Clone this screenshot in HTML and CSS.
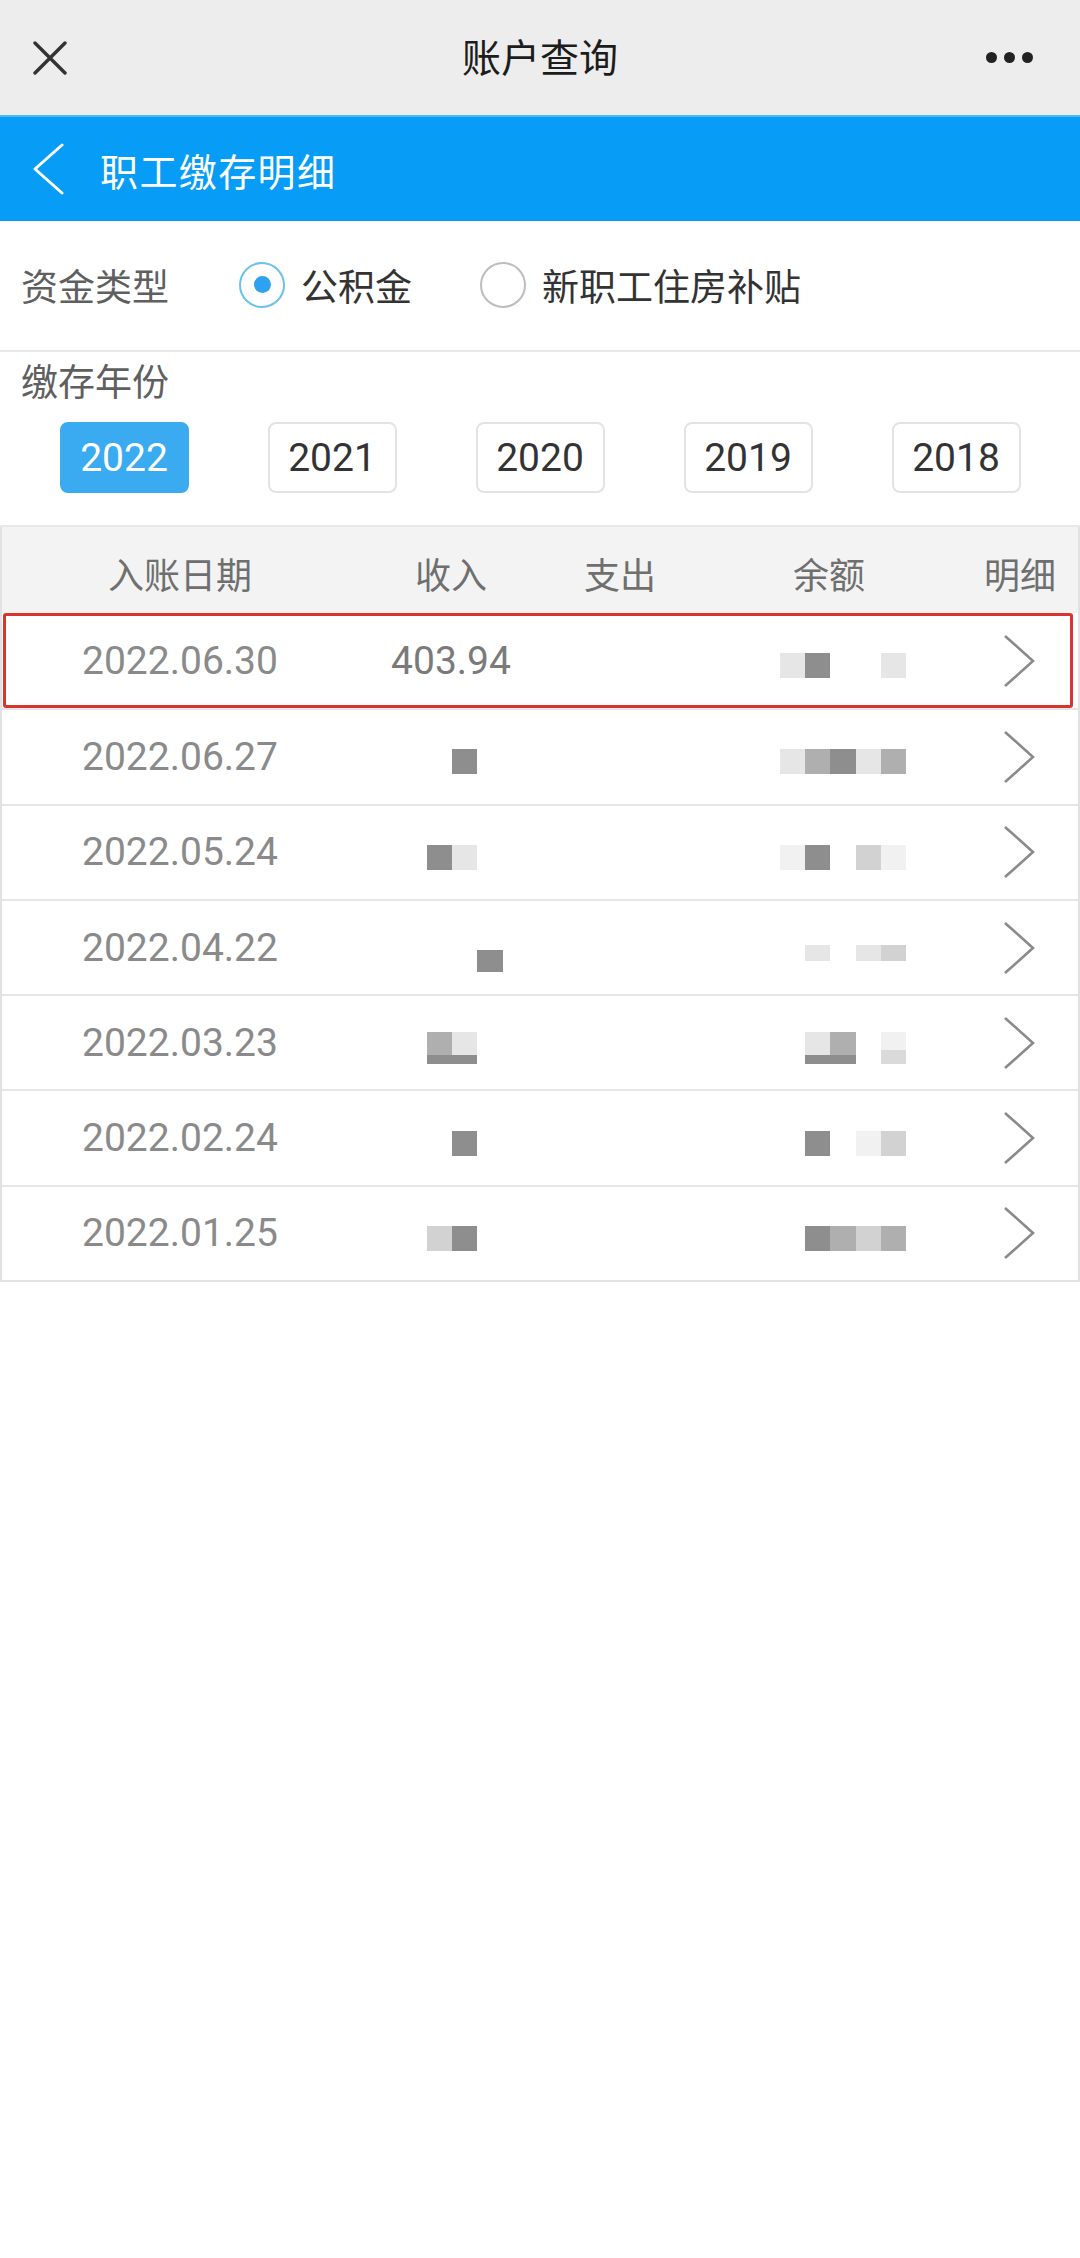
FILE: index.html
```html
<!DOCTYPE html>
<html lang="zh-CN">
<head>
<meta charset="utf-8">
<title>账户查询</title>
<link rel="stylesheet" href="styles.css">
</head>
<body>
<div class="page">
  <header class="topbar">
    <svg class="close" viewBox="0 0 34 34" width="34" height="34"><path d="M2 2L32 32M32 2L2 32" stroke="#333" stroke-width="3.4" stroke-linecap="round" fill="none"/></svg>
    <div class="topbar-title">账户查询</div>
    <div class="more"><span></span><span></span><span></span></div>
  </header>

  <div class="navbar">
    <svg class="back" viewBox="0 0 32 52" width="32" height="52"><polyline points="30,2 3,26 30,50" stroke="#fff" stroke-width="3" fill="none" stroke-linecap="round" stroke-linejoin="round"/></svg>
    <div class="nav-title">职工缴存明细</div>
  </div>

  <section class="fund-type">
    <span class="label">资金类型</span>
    <label class="radio checked"><span class="circle"></span><span class="radio-text">公积金</span></label>
    <label class="radio"><span class="circle"></span><span class="radio-text">新职工住房补贴</span></label>
  </section>

  <section class="years">
    <div class="label">缴存年份</div>
    <div class="year-grid">
      <div class="year active">2022</div>
      <div class="year">2021</div>
      <div class="year">2020</div>
      <div class="year">2019</div>
      <div class="year">2018</div>
    </div>
  </section>

  <div class="table">
    <div class="thead row-grid">
      <div>入账日期</div><div>收入</div><div>支出</div><div>余额</div><div>明细</div>
    </div>

    <div class="trow row-grid highlight">
      <div class="date">2022.06.30</div>
      <div class="num">403.94</div>
      <div></div>
      <div class="mask bal"><i class="b1"></i><i class="b4"></i><i></i><i></i><i class="b1"></i></div>
      <div class="arrow"><svg viewBox="0 0 32 52" width="32" height="52"><polyline points="2,1 30,26 2,51" stroke="#8a8a8a" stroke-width="2.6" fill="none"/></svg></div>
    </div>

    <div class="trow row-grid">
      <div class="date">2022.06.27</div>
      <div class="mask inc"><i></i><i class="b4"></i></div>
      <div></div>
      <div class="mask bal"><i class="b1"></i><i class="b3"></i><i class="b4"></i><i class="b1"></i><i class="b3"></i></div>
      <div class="arrow"><svg viewBox="0 0 32 52" width="32" height="52"><polyline points="2,1 30,26 2,51" stroke="#8a8a8a" stroke-width="2.6" fill="none"/></svg></div>
    </div>

    <div class="trow row-grid">
      <div class="date">2022.05.24</div>
      <div class="mask inc"><i class="b4"></i><i class="b1"></i></div>
      <div></div>
      <div class="mask bal"><i class="b5"></i><i class="b4"></i><i></i><i class="b2"></i><i class="b5"></i></div>
      <div class="arrow"><svg viewBox="0 0 32 52" width="32" height="52"><polyline points="2,1 30,26 2,51" stroke="#8a8a8a" stroke-width="2.6" fill="none"/></svg></div>
    </div>

    <div class="trow row-grid">
      <div class="date">2022.04.22</div>
      <div class="mask inc low"><i></i><i></i><i class="b4"></i></div>
      <div></div>
      <div class="mask bal short"><i></i><i class="b1"></i><i></i><i class="b1"></i><i class="b2"></i></div>
      <div class="arrow"><svg viewBox="0 0 32 52" width="32" height="52"><polyline points="2,1 30,26 2,51" stroke="#8a8a8a" stroke-width="2.6" fill="none"/></svg></div>
    </div>

    <div class="trow row-grid">
      <div class="date">2022.03.23</div>
      <div class="mask inc tall"><i class="b3 tail"></i><i class="b1 tail"></i></div>
      <div></div>
      <div class="mask bal tall"><i></i><i class="b1 tail"></i><i class="b3 tail"></i><i></i><i class="b5 tail-light"></i></div>
      <div class="arrow"><svg viewBox="0 0 32 52" width="32" height="52"><polyline points="2,1 30,26 2,51" stroke="#8a8a8a" stroke-width="2.6" fill="none"/></svg></div>
    </div>

    <div class="trow row-grid">
      <div class="date">2022.02.24</div>
      <div class="mask inc"><i></i><i class="b4"></i></div>
      <div></div>
      <div class="mask bal"><i></i><i class="b4"></i><i></i><i class="b5"></i><i class="b2"></i></div>
      <div class="arrow"><svg viewBox="0 0 32 52" width="32" height="52"><polyline points="2,1 30,26 2,51" stroke="#8a8a8a" stroke-width="2.6" fill="none"/></svg></div>
    </div>

    <div class="trow row-grid">
      <div class="date">2022.01.25</div>
      <div class="mask inc"><i class="b2"></i><i class="b4"></i></div>
      <div></div>
      <div class="mask bal"><i></i><i class="b4"></i><i class="b3"></i><i class="b2"></i><i class="b3"></i></div>
      <div class="arrow"><svg viewBox="0 0 32 52" width="32" height="52"><polyline points="2,1 30,26 2,51" stroke="#8a8a8a" stroke-width="2.6" fill="none"/></svg></div>
    </div>
  </div>
</div>
</body>
</html>
```

FILE: styles.css
```css
* { box-sizing: border-box; }

html, body {
  margin: 0;
  padding: 0;
  background: #ffffff;
}

body {
  font-family: Roboto, "Noto Sans CJK SC", "Noto Sans", sans-serif;
  color: #333;
}

.page {
  width: 1080px;
  min-height: 2258px;
  background: #fff;
}

/* top bar */
.topbar {
  height: 115px;
  background: #ededed;
  display: flex;
  align-items: center;
  position: relative;
  padding: 0 33px;
}

.close {
  display: block;
}

.topbar-title {
  position: absolute;
  left: 0;
  right: 0;
  top: 2px;
  text-align: center;
  font-size: 39px;
  line-height: 115px;
  color: #1c1c1c;
  pointer-events: none;
}

.more {
  margin-left: auto;
  display: flex;
  gap: 7px;
  margin-right: 14px;
}

.more span {
  width: 11px;
  height: 11px;
  border-radius: 50%;
  background: #222;
}

/* blue nav */
.navbar {
  height: 106px;
  background: #079cf6;
  display: flex;
  align-items: center;
  padding-left: 32px;
  border-top: 2px solid #4db8f7;
}

.back { display: block; }

.nav-title {
  margin-left: 36px;
  font-size: 38px;
  color: #fff;
  letter-spacing: 1.4px;
}

/* fund type */
.fund-type {
  height: 131px;
  display: flex;
  align-items: center;
  padding-left: 21px;
  border-bottom: 2px solid #e8e8e8;
  padding-bottom: 2px;
}

.label {
  font-size: 37px;
  color: #5f5f5f;
}

.radio {
  display: flex;
  align-items: center;
}

.fund-type .label + .radio { margin-left: 70px; }
.radio + .radio { margin-left: 68px; }

.circle {
  width: 46px;
  height: 46px;
  border-radius: 50%;
  border: 2px solid #bdbdbd;
  display: flex;
  align-items: center;
  justify-content: center;
}

.radio.checked .circle {
  border-color: #6cc0ec;
}

.radio.checked .circle::after {
  content: "";
  width: 17px;
  height: 17px;
  border-radius: 50%;
  background: #2ea2ef;
}

.radio-text {
  margin-left: 16px;
  font-size: 37px;
  color: #333;
}

/* years */
.years {
  padding-top: 10px;
  padding-bottom: 32px;
  border-bottom: 2px solid #e8e8e8;
}

.years .label {
  padding-left: 21px;
  line-height: 44px;
}

.year-grid {
  margin-top: 16px;
  padding: 0 20px;
  display: grid;
  grid-template-columns: repeat(5, 1fr);
  justify-items: center;
}

.year {
  width: 129px;
  height: 71px;
  border: 2px solid #e3e3e3;
  border-radius: 8px;
  display: flex;
  align-items: center;
  justify-content: center;
  font-size: 39px;
  color: #333;
}

.year.active {
  background: #3aabf0;
  border-color: #3aabf0;
  color: #fff;
}

/* table */
.table {
  border-left: 2px solid #e2e2e2;
  border-right: 2px solid #e2e2e2;
  border-bottom: 2px solid #e2e2e2;
}

.row-grid {
  display: grid;
  grid-template-columns: 356px 186px 152px 266px 1fr;
  align-items: center;
}

.thead {
  height: 86px;
  background: #f3f3f3;
  font-size: 36px;
  color: #6f6f6f;
  text-align: center;
  padding-top: 6px;
}

.trow {
  height: 95.3px;
  border-top: 2px solid #e6e6e6;
  position: relative;
}

.thead + .trow { border-top: none; }

.date, .num {
  text-align: center;
  font-size: 39px;
  color: #8a8a8a;
}

.num { color: #7a7a7a; }

.mask {
  display: flex;
  align-self: stretch;
  align-items: center;
  padding-top: 10px;
}

.mask.inc { padding-left: 69px; }
.mask.bal { padding-left: 84px; }
.mask.low { padding-top: 26px; }

.mask i {
  display: block;
  width: 25.2px;
  height: 25px;
}

.mask.short i { height: 16px; }
.mask.low i { height: 22px; }
.mask.tall i { height: 32px; }

.b1 { background: #e6e6e6; }
.b2 { background: #d2d2d2; }
.b3 { background: #afafaf; }
.b4 { background: #8e8e8e; }
.b5 { background: #f1f1f1; }

.tail { box-shadow: inset 0 -9px 0 #8e8e8e; }
.tail-light { box-shadow: inset 0 -14px 0 #dadada; }

.arrow {
  display: flex;
  justify-content: flex-start;
  padding-left: 41px;
}

.arrow svg { display: block; }

.highlight::after {
  content: "";
  position: absolute;
  left: 1px;
  right: 5px;
  top: 0;
  bottom: 0;
  border: 3px solid #d8352f;
  border-radius: 3px;
  pointer-events: none;
}
```
